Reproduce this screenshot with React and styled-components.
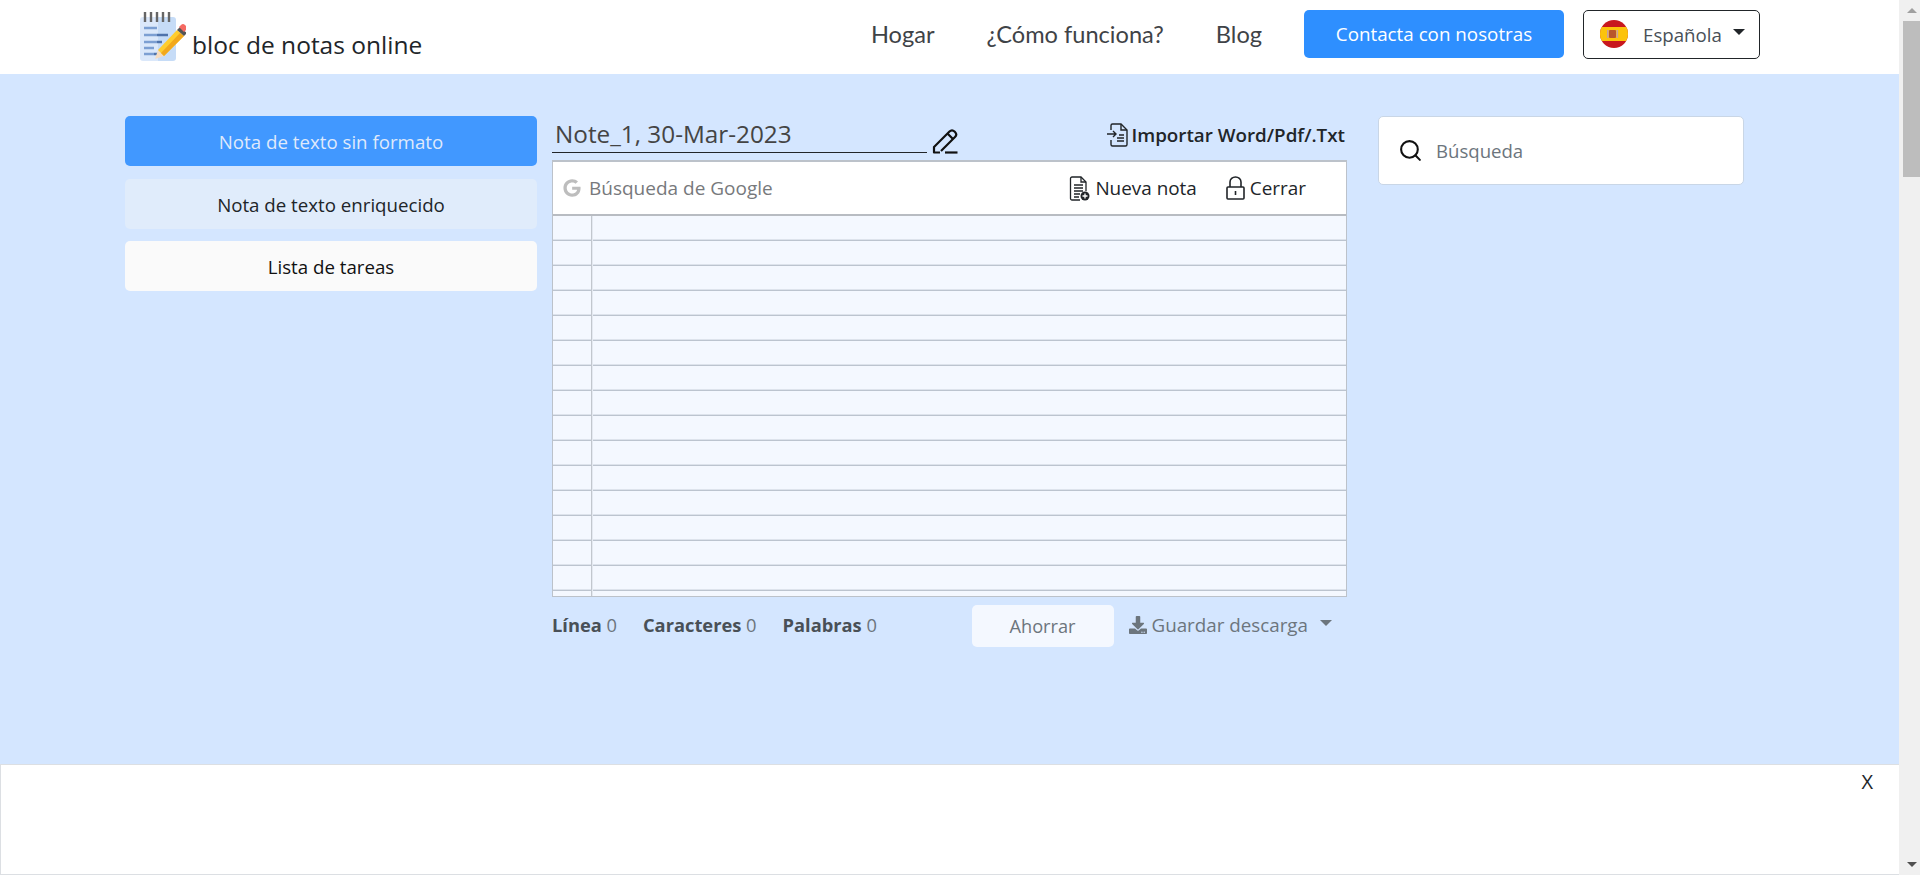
import React from 'react';
import styled, { createGlobalStyle } from 'styled-components';
import { Search } from 'lucide-react';
import { FaGoogle, FaDownload } from 'react-icons/fa';

const GlobalStyle = createGlobalStyle`
  html, body { margin: 0; padding: 0; height: 100%; overflow: hidden; }
  body { font-family: "Open Sans", "Noto Sans", sans-serif; color: #212529; }
  * { box-sizing: border-box; }
`;

const Shell = styled.div`
  display: flex;
  height: 875px;
  width: 1920px;
  overflow: hidden;
`;

const Page = styled.div`
  display: flex;
  flex-direction: column;
  width: 1899px;
  background: #d4e6ff;
`;

const Header = styled.header`
  display: flex;
  align-items: center;
  justify-content: space-between;
  height: 74px;
  padding: 0 139px 0 138px;
  background: #fff;
`;

const Brand = styled.div`
  display: flex;
  align-items: flex-end;
  gap: 6px;
  height: 50px;
  margin-top: -2px;
  font-size: 24.5px;
  font-weight: 500;
  color: #212529;
  line-height: 32px;
`;

const Nav = styled.nav`
  display: flex;
  align-items: center;
  margin-top: -6px;
`;

const NavLink = styled.a`
  font-family: "Lato", sans-serif;
  font-size: 23.6px;
  color: #3f4347;
  margin-right: ${p => p.$gap}px;
`;

const ContactButton = styled.button`
  width: 260px;
  height: 48px;
  border: 0;
  border-radius: 5px;
  background: #2e8fff;
  color: #fff;
  font: 500 18.8px "Open Sans", sans-serif;
  margin-right: 19px;
`;

const LangButton = styled.button`
  display: flex;
  align-items: center;
  width: 177px;
  height: 49px;
  padding: 0 12px 0 15px;
  background: #fff;
  border: 1px solid #212529;
  border-radius: 5px;
  font: 400 18.7px "Open Sans", sans-serif;
  color: #495057;
`;

const LangLabel = styled.span`
  margin-left: 14px;
`;

const Caret = styled.span`
  display: inline-block;
  border-top: 6px solid ${p => p.$color || '#212529'};
  border-left: 6px solid transparent;
  border-right: 6px solid transparent;
  margin-left: ${p => p.$left || 11}px;
  margin-top: -5px;
`;

const Content = styled.main`
  flex: 1;
  display: grid;
  grid-template-columns: 412px 795px 382px;
  column-gap: 15px;
  align-items: start;
  padding: 42px 0 0 125px;
`;

const Side = styled.div`
  display: flex;
  flex-direction: column;
`;

const NoteType = styled.button`
  height: 50px;
  border: 0;
  border-radius: 5px;
  margin-bottom: ${p => p.$gap}px;
  background: ${p => p.$bg};
  color: ${p => p.$color};
  font: 400 18.7px "Open Sans", sans-serif;
`;

const Middle = styled.div`
  display: flex;
  flex-direction: column;
`;

const TitleRow = styled.div`
  display: flex;
  align-items: flex-end;
  height: 37px;
  margin-bottom: 7px;
`;

const TitleText = styled.div`
  width: 375px;
  height: 38px;
  padding-left: 3px;
  border-bottom: 1px solid #212529;
  font-size: 24.3px;
  line-height: 38px;
  color: #444;
`;

const PenIcon = styled.svg`
  margin-left: 4px;
  margin-bottom: -1px;
`;

const ImportLink = styled.div`
  display: flex;
  align-items: center;
  gap: 3px;
  margin-left: auto;
  margin-right: 2px;
  height: 37px;
  font-size: 18.8px;
  font-weight: 600;
  color: #212529;
`;

const Editor = styled.div`
  height: 437px;
  border: 1px solid #bcc2ca;
  border-top-width: 2px;
  display: flex;
  flex-direction: column;
`;

const Toolbar = styled.div`
  display: flex;
  align-items: center;
  height: 54px;
  flex: none;
  padding: 0 40px 0 10px;
  background: #fff;
  border-bottom: 2px solid #b8bcc2;
`;

const GoogleSearch = styled.div`
  display: flex;
  align-items: center;
  gap: 8px;
  margin-right: auto;
  font-size: 19px;
  color: #77797c;
`;

const ToolItem = styled.div`
  display: flex;
  align-items: center;
  gap: 5px;
  margin-left: ${p => p.$left}px;
  font-size: 18.9px;
  color: #212529;
`;

const Paper = styled.div`
  flex: 1;
  background-color: #f4f8ff;
  background-image:
    linear-gradient(to right, transparent 38px, #c2c7ce 38px, #c2c7ce 39px, #e4e9f1 39px, #e4e9f1 40px, transparent 40px),
    repeating-linear-gradient(to bottom, transparent 0, transparent 23px, #dde3ec 23px, #dde3ec 24px, #bcc4cf 24px, #bcc4cf 25px);
`;

const StatusRow = styled.div`
  display: flex;
  align-items: flex-start;
  margin-top: 8px;
  padding-left: 0;
`;

const Stat = styled.div`
  margin: 8px ${p => p.$gap}px 0 0;
  font-size: 18.3px;
  line-height: 24px;
  color: #6c757d;
  b { font-weight: 700; color: #495057; }
`;

const SaveButton = styled.button`
  width: 142px;
  height: 42px;
  margin-left: auto;
  border: 0;
  border-radius: 5px;
  background: #f4f8ff;
  color: #6c757d;
  font: 400 18.2px "Open Sans", sans-serif;
`;

const DownloadLink = styled.div`
  display: flex;
  align-items: center;
  gap: 5px;
  height: 24px;
  margin: 8px 15px 0 15px;
  font-size: 18.8px;
  color: #6c757d;
`;

const SearchCard = styled.div`
  display: flex;
  align-items: center;
  gap: 13px;
  height: 69px;
  margin-left: 16px;
  padding-left: 19px;
  background: #fff;
  border: 1px solid #c9d6e6;
  border-radius: 5px;
  font-size: 18.6px;
  color: #6c757d;
`;

const AdBar = styled.div`
  position: relative;
  height: 111px;
  flex: none;
  background: #fff;
  border: 1px solid #dcdfe3;
  border-right: 0;
`;

const CloseMark = styled.span`
  position: absolute;
  top: 5px;
  right: 26px;
  font-size: 20px;
  line-height: 24px;
  color: #212529;
`;

const ScrollBar = styled.div`
  flex: none;
  width: 21px;
  display: flex;
  flex-direction: column;
  align-items: flex-end;
  background: #f0f0f0;
`;

const Arrow = styled.div`
  width: 17px;
  height: 21px;
  display: flex;
  align-items: center;
  justify-content: center;
  &::before {
    content: '';
    border-left: 5px solid transparent;
    border-right: 5px solid transparent;
    ${p => (p.$up ? 'border-bottom: 5px solid #a0a0a0;' : 'border-top: 5px solid #505050;')}
  }
`;

const Thumb = styled.div`
  width: 17px;
  height: 156px;
  background: #bdbdbd;
`;

const Track = styled.div`
  flex: 1;
`;

const LogoIcon = () => (
  <svg width="48" height="50" viewBox="0 0 48 50">
    <path d="M2 9a3 3 0 0 1 3-3h15v44H5a3 3 0 0 1-3-3z" fill="#dbe8fa" />
    <path d="M20 6h15a3 3 0 0 1 3 3v38a3 3 0 0 1-3 3H20z" fill="#c6dcf7" />
    <g stroke="#666" strokeWidth="2.4">
      <path d="M7 1v10M13 1v10M19 1v10M25 1v10M31 1v10" />
    </g>
    <g strokeWidth="2.4">
      <path d="M6 17h13M6 24h13M6 31h13M6 37h10M6 43h10" stroke="#7c9fd2" />
      <path d="M19 24h11M19 31h5M16 43h6" stroke="#4f73ab" />
    </g>
    <path d="M20 39l-3 9 9-3z" fill="#f6dcc0" />
    <path d="M20 39L39 19l7 6-20 20z" fill="#ffcd2e" />
    <path d="M23 42L42 22l4 3-20 20z" fill="#f2a81c" />
    <path d="M39 19l3-3 7 6-3 3z" fill="#555" />
    <path d="M42 16l2-2a3 3 0 0 1 4 0l1 1a3 3 0 0 1 0 4l-2 2z" fill="#f56a62" transform="translate(-1 0)" />
  </svg>
);

const FlagIcon = () => (
  <svg width="30" height="30" viewBox="0 0 30 30">
    <defs>
      <clipPath id="flagClip"><circle cx="15" cy="15" r="14" /></clipPath>
    </defs>
    <g clipPath="url(#flagClip)">
      <rect width="30" height="30" fill="#c8171e" />
      <rect y="8" width="30" height="14" fill="#fcc30b" />
      <rect x="10" y="11" width="7" height="8" rx="1" fill="#b8562c" />
      <rect x="8" y="11" width="1.6" height="8" fill="#c8a0a0" />
      <rect x="17.5" y="11" width="1.6" height="8" fill="#c8a0a0" />
    </g>
  </svg>
);

const EditIcon = () => (
  <PenIcon width="27" height="26" viewBox="0 0 27 26" fill="none" stroke="#111" strokeWidth="2.2">
    <path d="M9 24.500H3v-5.500L18.500 3.500q2.500-2.500 5 0l.5.500q2.500 2.500 0 5L10 23" strokeLinejoin="round" />
    <path d="M16.500 5.500l5.500 5.500" />
    <path d="M14 24.500h12.500" />
  </PenIcon>
);

const ImportIcon = () => (
  <svg width="23" height="24" viewBox="0 0 23 24" fill="none" stroke="#212529" strokeWidth="1.4">
    <path d="M5 7V2.500A1.500 1.500 0 0 1 6.500 1H15l6 6v14.500a1.500 1.500 0 0 1-1.500 1.500h-13A1.500 1.500 0 0 1 5 21.500V17" />
    <path d="M15 1v6h6M1 11h9M7 8l3 3-3 3M13 12h5M11 15h7M11 18h7" />
  </svg>
);

const NewNoteIcon = () => (
  <svg width="21" height="25" viewBox="0 0 21 25" fill="none" stroke="#212529" strokeWidth="1.3">
    <path d="M11 24H3a1.500 1.500 0 0 1-1.500-1.500V2.500A1.500 1.500 0 0 1 3 1h9l5 5v9" />
    <path d="M12 1v5h5M5 9h9M5 12h9M5 15h9M5 18h6M5 21h5" />
    <circle cx="16" cy="20" r="4.500" fill="#212529" stroke="none" />
    <path d="M16 17.500v5M13.500 20h5" stroke="#fff" />
  </svg>
);

const LockIcon = () => (
  <svg width="19" height="24" viewBox="0 0 19 24" fill="none" stroke="#212529" strokeWidth="1.600">
    <path d="M4 11V6a5.500 5 0 0 1 11 0v5" />
    <rect x="1" y="11" width="17" height="12" rx="1" />
    <path d="M9.500 15v4" />
  </svg>
);

export default function App() {
  const navItems = [
    { label: 'Hogar', gap: 52 },
    { label: '¿Cómo funciona?', gap: 52 },
    { label: 'Blog', gap: 42 },
  ];
  const noteTypes = [
    { label: 'Nota de texto sin formato', bg: '#4198ff', color: '#dfe9fb', gap: 13 },
    { label: 'Nota de texto enriquecido', bg: '#e0ecfb', color: '#212529', gap: 12 },
    { label: 'Lista de tareas', bg: '#fafafa', color: '#111', gap: 0 },
  ];
  return (
    <Shell>
      <GlobalStyle />
      <Page>
        <Header>
          <Brand>
            <LogoIcon />
            bloc de notas online
          </Brand>
          <Nav>
            {navItems.map(item => (
              <NavLink key={item.label} $gap={item.gap}>{item.label}</NavLink>
            ))}
            <ContactButton>Contacta con nosotras</ContactButton>
            <LangButton>
              <FlagIcon />
              <LangLabel>Española</LangLabel>
              <Caret />
            </LangButton>
          </Nav>
        </Header>
        <Content>
          <Side>
            {noteTypes.map(n => (
              <NoteType key={n.label} $bg={n.bg} $color={n.color} $gap={n.gap}>{n.label}</NoteType>
            ))}
          </Side>
          <Middle>
            <TitleRow>
              <TitleText>Note_1, 30-Mar-2023</TitleText>
              <EditIcon />
              <ImportLink>
                <ImportIcon />
                Importar Word/Pdf/.Txt
              </ImportLink>
            </TitleRow>
            <Editor>
              <Toolbar>
                <GoogleSearch>
                  <FaGoogle size={18} color="#bdbdbd" />
                  Búsqueda de Google
                </GoogleSearch>
                <ToolItem $left={0}>
                  <NewNoteIcon />
                  Nueva nota
                </ToolItem>
                <ToolItem $left={29}>
                  <LockIcon />
                  Cerrar
                </ToolItem>
              </Toolbar>
              <Paper />
            </Editor>
            <StatusRow>
              <Stat $gap={26}><b>Línea</b> 0</Stat>
              <Stat $gap={26}><b>Caracteres</b> 0</Stat>
              <Stat $gap={0}><b>Palabras</b> 0</Stat>
              <SaveButton>Ahorrar</SaveButton>
              <DownloadLink>
                <FaDownload size={18} color="#6c757d" />
                Guardar descarga
                <Caret $color="#6c757d" $left={7} />
              </DownloadLink>
            </StatusRow>
          </Middle>
          <SearchCard>
            <Search size={25} color="#111" strokeWidth={2} />
            Búsqueda
          </SearchCard>
        </Content>
        <AdBar>
          <CloseMark>X</CloseMark>
        </AdBar>
      </Page>
      <ScrollBar>
        <Arrow $up />
        <Thumb />
        <Track />
        <Arrow />
      </ScrollBar>
    </Shell>
  );
}
